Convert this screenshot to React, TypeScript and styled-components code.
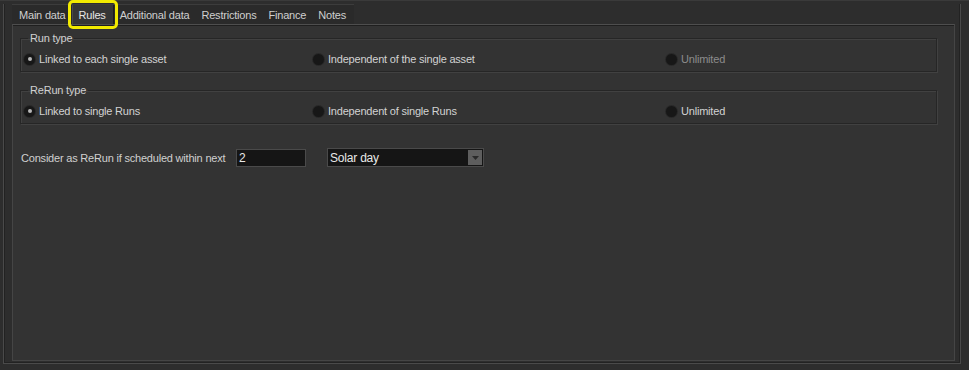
import styled, { createGlobalStyle } from 'styled-components';

const GlobalStyle = createGlobalStyle`
  html, body {
    margin: 0;
    padding: 0;
    background: #2b2b2b;
    font-family: Tahoma, 'Liberation Sans', Arial, sans-serif;
    font-size: 11px;
    letter-spacing: -0.2px;
    color: #d2d2d2;
  }
`;

const Frame = styled.div`
  width: 969px;
  height: 370px;
  box-sizing: border-box;
  padding: 3px 8px 6px 3px;
  background: #2d2d2d;
  border-top: 1px solid #3a3a3a;
  display: flex;
  flex-direction: column;
`;

const Outer = styled.div`
  flex: 1;
  display: flex;
  flex-direction: column;
  border-left: 1px solid #4a4a4a;
  border-right: 1px solid #4a4a4a;
  border-bottom: 1px solid #4a4a4a;
  padding: 0 5px 2px 8px;
  box-shadow: inset 1px 0 0 #222, inset -1px 0 0 #222, inset 0 -1px 0 #222;
`;

const TabStrip = styled.div`
  display: flex;
  align-self: flex-start;
  height: 19px;
  background: #2a2a2a;
  border-top: 1px solid #3c3c3c;
  padding: 0 2px 0 1px;
`;

const Tab = styled.div<{ $active?: boolean }>`
  position: relative;
  padding: 0 5px;
  display: flex;
  align-items: center;
  color: ${(p) => (p.$active ? '#e6e6e6' : '#cfcfcf')};
  background: ${(p) => (p.$active ? '#363636' : 'transparent')};
  border-left: ${(p) => (p.$active ? '1px solid #4a4a4a' : '1px solid transparent')};
  border-right: ${(p) => (p.$active ? '1px solid #1e1e1e' : '1px solid transparent')};
  ${(p) =>
    p.$active &&
    `
    padding: 0 7px 0 6px;
    &::after {
      content: '';
      position: absolute;
      left: -5px;
      right: -5px;
      top: -5px;
      bottom: -5px;
      border: 3px solid #f2ea00;
      border-radius: 5px;
      pointer-events: none;
    }
  `}
`;

const Panel = styled.div`
  flex: 1;
  background: #333333;
  border: 1px solid #454545;
  border-top-color: #4e4e4e;
  box-shadow: inset 0 1px 0 #1f1f1f;
  padding: 7px 17px 0 7px;
  display: flex;
  flex-direction: column;
`;

const Group = styled.fieldset`
  margin: 0 0 12px 0;
  padding: 9px 0 6px 3px;
  border: 1px solid #262626;
  box-shadow: 1px 1px 0 #414141, inset 1px 1px 0 #414141;
  min-width: 0;
`;

const Legend = styled.legend`
  padding: 0 2px;
  margin-left: 4px;
  color: #d0d0d0;
  line-height: 12px;
`;

const RadioRow = styled.div`
  display: grid;
  grid-template-columns: 289px 353px 1fr;
  align-items: center;
`;

const Option = styled.label<{ $disabled?: boolean }>`
  display: flex;
  align-items: center;
  color: ${(p) => (p.$disabled ? '#8c8c8c' : '#d2d2d2')};
`;

const Dot = styled.span<{ $checked?: boolean }>`
  width: 11px;
  height: 11px;
  border-radius: 50%;
  background: #171717;
  box-shadow: 0 0 0 1px #282828;
  margin-right: 4px;
  display: flex;
  align-items: center;
  justify-content: center;
  &::after {
    content: '';
    width: 4px;
    height: 4px;
    border-radius: 50%;
    background: ${(p) => (p.$checked ? '#b8b8b8' : 'transparent')};
  }
`;

const FieldRow = styled.div`
  display: flex;
  align-items: center;
  margin-top: 12px;
  padding-left: 1px;
`;

const FieldLabel = styled.span`
  width: 215px;
  color: #d0d0d0;
`;

const NumberBox = styled.div`
  width: 70px;
  height: 18px;
  box-sizing: border-box;
  background: #151515;
  border: 1px solid #4a4a4a;
  color: #e8e8e8;
  padding-left: 2px;
  display: flex;
  align-items: center;
  font-size: 12px;
`;

const Select = styled.div`
  margin-left: 21px;
  width: 157px;
  height: 19px;
  box-sizing: border-box;
  background: #151515;
  border: 1px solid #4a4a4a;
  display: flex;
  align-items: center;
  justify-content: space-between;
  padding-left: 2px;
  color: #e8e8e8;
  font-size: 12px;
`;

const ArrowButton = styled.div`
  width: 14px;
  height: 15px;
  margin-right: 1px;
  background: #5e5e5e;
  display: flex;
  align-items: center;
  justify-content: center;
`;

const tabs = ['Main data', 'Rules', 'Additional data', 'Restrictions', 'Finance', 'Notes'];

const groups = [
  {
    title: 'Run type',
    options: [
      { text: 'Linked to each single asset', checked: true },
      { text: 'Independent of the single asset' },
      { text: 'Unlimited', disabled: true },
    ],
  },
  {
    title: 'ReRun type',
    options: [
      { text: 'Linked to single Runs', checked: true },
      { text: 'Independent of single Runs' },
      { text: 'Unlimited' },
    ],
  },
];

export default function App() {
  return (
    <>
      <GlobalStyle />
      <Frame>
        <Outer>
          <TabStrip>
            {tabs.map((t) => (
              <Tab key={t} $active={t === 'Rules'}>
                {t}
              </Tab>
            ))}
          </TabStrip>
          <Panel>
            {groups.map((g) => (
              <Group key={g.title}>
                <Legend>{g.title}</Legend>
                <RadioRow>
                  {g.options.map((o) => (
                    <Option key={o.text} $disabled={o.disabled}>
                      <Dot $checked={o.checked} />
                      {o.text}
                    </Option>
                  ))}
                </RadioRow>
              </Group>
            ))}
            <FieldRow>
              <FieldLabel>Consider as ReRun if scheduled within next</FieldLabel>
              <NumberBox>2</NumberBox>
              <Select>
                Solar day
                <ArrowButton>
                  <svg width="7" height="4" viewBox="0 0 7 4">
                    <path d="M0 0h7L3.5 4z" fill="#2a2a2a" />
                  </svg>
                </ArrowButton>
              </Select>
            </FieldRow>
          </Panel>
        </Outer>
      </Frame>
    </>
  );
}
